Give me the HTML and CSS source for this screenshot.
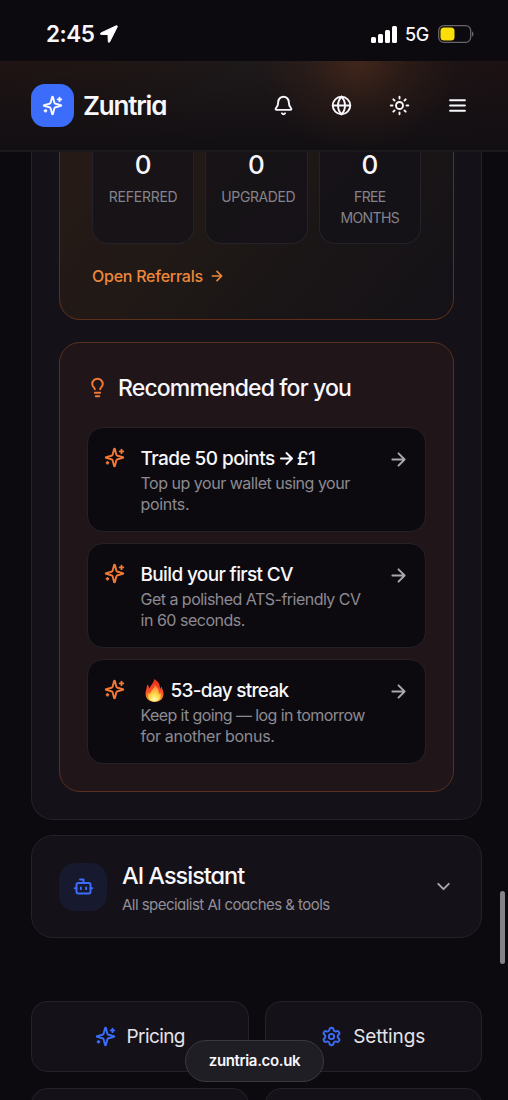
FILE: index.html
```html
<!DOCTYPE html>
<html lang="en">
<head>
<meta charset="utf-8">
<title>Zuntria</title>
<link rel="stylesheet" href="styles.css">
</head>
<body>
<svg class="defs" aria-hidden="true">
  <symbol id="sparkles" viewBox="0 0 24 24"><path d="M9.937 15.5A2 2 0 0 0 8.5 14.063l-6.135-1.582a.5.5 0 0 1 0-.962L8.5 9.936A2 2 0 0 0 9.937 8.5l1.582-6.135a.5.5 0 0 1 .963 0L14.063 8.5A2 2 0 0 0 15.5 9.937l6.135 1.581a.5.5 0 0 1 0 .964L15.5 14.063a2 2 0 0 0-1.437 1.437l-1.582 6.135a.5.5 0 0 1-.963 0z"/><path d="M20 3v4M22 5h-4M4 17v2M5 18H3"/></symbol>
  <symbol id="arrow" viewBox="0 0 24 24"><path d="M5 12h14M12 5l7 7-7 7"/></symbol>
</svg>
<div class="screen">
  <div class="status">
    <span class="time">2:45</span>
    <svg class="location" viewBox="0 0 18 18"><path d="M16.200.8.9 8c-.9.4-.6 1.400.2 1.400l6.900.1.3 7c0 1 1 1.200 1.400.3L17.200 1.900c.4-.9-.2-1.500-1-1.100z"/></svg>
    <svg class="signal" viewBox="0 0 27 17"><rect x="0" y="11" width="5" height="6" rx="1.500"/><rect x="7" y="8" width="5" height="9" rx="1.500"/><rect x="14" y="4" width="5" height="13" rx="1.500"/><rect x="21" y="0" width="5" height="17" rx="1.500"/></svg>
    <span class="network">5G</span>
    <svg class="battery" viewBox="0 0 36 18"><rect x=".7" y=".7" width="32" height="16.600" rx="5" fill="none" stroke="#66656a" stroke-width="1.300"/><rect x="2.500" y="2.500" width="14" height="13" rx="3.500" fill="#fbdf09"/><path d="M34 6.500c2 .6 2 4.400 0 5z" fill="#66656a"/></svg>
  </div>
  <header class="header">
    <div class="logo"><svg class="icon"><use href="#sparkles"/></svg></div>
    <span class="brand">Zuntria</span>
    <nav class="nav">
      <svg class="icon" viewBox="0 0 24 24"><path d="M10.268 21a2 2 0 0 0 3.464 0M3.262 15.326A1 1 0 0 0 4 17h16a1 1 0 0 0 .74-1.673C19.410 13.956 18 12.499 18 8A6 6 0 0 0 6 8c0 4.499-1.411 5.956-2.738 7.326"/></svg>
      <svg class="icon" viewBox="0 0 24 24"><circle cx="12" cy="12" r="10"/><path d="M12 2a14.500 14.500 0 0 0 0 20 14.500 14.500 0 0 0 0-20M2 12h20"/></svg>
      <svg class="icon" viewBox="0 0 24 24"><circle cx="12" cy="12" r="4"/><path d="M12 2v2M12 20v2M4.930 4.930l1.410 1.410M17.660 17.660l1.410 1.410M2 12h2M20 12h2M6.340 17.660l-1.410 1.410M19.070 4.930l-1.410 1.410"/></svg>
      <svg class="icon" viewBox="0 0 24 24"><path d="M3.500 6h17M3.500 12h17M3.500 18h17"/></svg>
    </nav>
  </header>
  <main class="content">
    <section class="panel">
      <div class="referrals">
        <div class="stats">
          <div class="stat"><b>0</b><span class="l-ref">REFERRED</span></div>
          <div class="stat"><b>0</b><span class="l-upg">UPGRADED</span></div>
          <div class="stat"><b>0</b><span class="l-free">FREE MONTHS</span></div>
        </div>
        <a class="open"><span>Open Referrals</span><svg class="icon"><use href="#arrow"/></svg></a>
      </div>
      <div class="recommended">
        <h2 class="rec-title"><svg class="icon" viewBox="0 0 24 24"><path d="M15 14c.2-1 .7-1.700 1.500-2.500 1-.9 1.500-2.200 1.500-3.500A6 6 0 0 0 6 8c0 1 .2 2.200 1.500 3.500.7.7 1.300 1.500 1.500 2.500M9 18h6M10 22h4"/></svg><span>Recommended for you</span></h2>
        <div class="item">
          <svg class="icon spark"><use href="#sparkles"/></svg>
          <div class="copy"><h3><span class="t-trade">Trade 50 points</span><svg class="icon inline-arrow"><use href="#arrow"/></svg><span>£1</span></h3><p><span class="p1">Top up your wallet using your</span><br><span class="p2">points.</span></p></div>
          <svg class="icon go"><use href="#arrow"/></svg>
        </div>
        <div class="item">
          <svg class="icon spark"><use href="#sparkles"/></svg>
          <div class="copy"><h3><span class="t-build">Build your first CV</span></h3><p><span class="p3">Get a polished ATS-friendly CV</span><br><span class="p4">in 60 seconds.</span></p></div>
          <svg class="icon go"><use href="#arrow"/></svg>
        </div>
        <div class="item">
          <svg class="icon spark"><use href="#sparkles"/></svg>
          <div class="copy"><h3><svg class="flame" viewBox="0 0 20 24" role="img" aria-label="fire"><defs><linearGradient id="fg" x1="0" y1="0" x2="0" y2="1"><stop offset="0" stop-color="#e8301c"/><stop offset=".55" stop-color="#f9502a"/><stop offset="1" stop-color="#fca62e"/></linearGradient><radialGradient id="fi" cx=".5" cy=".9" r=".8"><stop offset="0" stop-color="#fffbc0"/><stop offset=".45" stop-color="#ffdc48"/><stop offset="1" stop-color="#fc8a3c"/></radialGradient></defs><path fill="url(#fg)" d="M9.500 0c.3 3.500-3.800 6-4.500 10C4.300 8.500 3.200 7.500 3.400 5.500 1.300 7.300 2 9.500 1.200 11.500-.5 16.500 1 23.500 9.500 24c8 .2 11-6 9.700-11-.4-1.700-1.500-3-1.300-5-1.400.5-1.800 1.700-2 3C15.800 6 14.500 2.500 9.500 0z"/><path fill="url(#fi)" d="M10 6.500c.5 3.500-4.500 5.500-4.500 9.500-.8-.5-1.200-1.500-1.200-2.500C1.500 18.500 4 23.400 9.700 23.500c6 0 8.300-5 6.300-9.500-.3 1-.8 1.500-1.500 1.800C15 12 13.500 8.500 10 6.500z"/></svg><span class="t-streak">53-day streak</span></h3><p><span class="p5">Keep it going — log in tomorrow</span><br><span class="p6">for another bonus.</span></p></div>
          <svg class="icon go"><use href="#arrow"/></svg>
        </div>
      </div>
    </section>
    <section class="assistant">
      <div class="bot"><svg class="icon" viewBox="0 0 24 24"><path d="M12 8V4H8"/><rect width="16" height="12" x="4" y="8" rx="2"/><path d="M2 14h2M20 14h2M15 13v2M9 13v2"/></svg></div>
      <div class="assistant-copy"><h2>AI Assistant</h2><p>All specialist AI coaches &amp; tools</p></div>
      <svg class="icon chevron" viewBox="0 0 24 24"><path d="m6 9 6 6 6-6"/></svg>
    </section>
    <div class="links">
      <a class="link"><svg class="icon"><use href="#sparkles"/></svg><span class="k1">Pricing</span></a>
      <a class="link"><svg class="icon" viewBox="0 0 24 24"><path d="M9.671 4.136a2.340 2.340 0 0 1 4.659 0 2.340 2.340 0 0 0 3.319 1.915 2.340 2.340 0 0 1 2.330 4.033 2.340 2.340 0 0 0 0 3.831 2.340 2.340 0 0 1-2.330 4.033 2.340 2.340 0 0 0-3.319 1.915 2.340 2.340 0 0 1-4.659 0 2.340 2.340 0 0 0-3.320-1.915 2.340 2.340 0 0 1-2.330-4.033 2.340 2.340 0 0 0 0-3.831A2.340 2.340 0 0 1 6.350 6.051a2.340 2.340 0 0 0 3.319-1.915"/><circle cx="12" cy="12" r="3"/></svg><span class="k2">Settings</span></a>
      <a class="link"></a>
      <a class="link"></a>
    </div>
  </main>
  <div class="scrollbar"></div>
  <div class="url">zuntria.co.uk</div>
</div>
</body>
</html>
```
FILE: styles.css
```css
* { box-sizing: border-box; }
body { margin: 0; background: #0c0a0f; }
h2, h3, p { margin: 0; font-weight: 500; }
span { white-space: nowrap; }
.defs { position: absolute; width: 0; height: 0; }
.screen { position: relative; width: 508px; height: 1100px; overflow: hidden; display: flex; flex-direction: column; background: #0c0a0f; color: #f8f7fb; font-family: Inter, "Liberation Sans", sans-serif; }
.icon { display: block; flex: none; width: 21px; height: 21px; fill: none; stroke: currentColor; stroke-width: 2.200; stroke-linecap: round; stroke-linejoin: round; }

.status { flex: none; height: 61px; display: flex; align-items: center; padding: 7px 34px 0 46px; }
.time { width: 49px; margin-top: -2px; font-size: 22.500px; font-weight: 600; letter-spacing: -.5px; }
.location { width: 18px; height: 18px; margin-left: 5px; fill: #fff; stroke: #fff; stroke-width: 1; stroke-linejoin: round; }
.signal { width: 27px; height: 17px; margin-left: auto; fill: #fff; }
.network { width: 25px; margin: 0 8px 0 7px; font-size: 18px; font-weight: 500; letter-spacing: -.4px; }
.battery { width: 36px; height: 18px; }

.header { flex: none; height: 91px; display: flex; align-items: center; padding: 0 40px 1px 31px; border-bottom: 2px solid #1c191e; background: radial-gradient(ellipse 100px 90px at 358px 0, rgba(100, 54, 30, .5), rgba(90, 48, 28, .2) 50%, transparent), linear-gradient(180deg, rgba(18, 15, 19, 0), #120f13 96%), linear-gradient(90deg, #1f1413 0, #1f1614 20%, #1e191a 50%, #1e1515 80%, #1c1113 100%); }
.logo { display: grid; place-items: center; width: 43px; height: 43px; border-radius: 14px; background: #3c6dfa; }
.brand { margin-left: 9px; font-size: 26px; font-weight: 600; letter-spacing: -1.200px; font-feature-settings: "cv11"; }
.nav { display: flex; gap: 37px; margin-left: auto; }

.content { flex: none; padding: 0 26px 0 31px; }
.panel { padding: 0 27px 27px; border: 1px solid #242229; border-top: 0; border-radius: 0 0 22px 22px; background: #141218; }
.referrals { height: 168px; padding: 0 32px; border: 1px solid #602f1a; border-top: 0; border-radius: 0 0 21px 21px; background: linear-gradient(130deg, #261a16 0, #201916 35%, #1a1516 65%, #141218 100%); }
.stats { display: grid; grid-template-columns: repeat(3, minmax(0, 1fr)); gap: 11px; height: 92px; }
.stat { padding: 0 15px; border: 1px solid #242229; border-top: 0; border-radius: 0 0 16px 16px; background: rgba(20, 18, 24, .75); text-align: center; }
.stat b { display: block; height: 34px; line-height: 26px; font-size: 26px; font-weight: 450; font-feature-settings: "cv11"; }
.stat span { display: block; font-size: 14px; line-height: 21px; color: #85838b; white-space: normal; letter-spacing: -.25px; }
.stat .l-upg { letter-spacing: -.4px; }
.stat .l-free { letter-spacing: -.6px; }
.open { display: flex; align-items: center; gap: 6px; margin-top: 21px; height: 22px; color: #ed883b; font-size: 16px; font-weight: 500; letter-spacing: -.25px; }
.open .icon { width: 16px; height: 16px; stroke-width: 2.500; }

.recommended { margin-top: 22px; height: 450px; padding: 27px; border: 1px solid #59301f; border-radius: 21px; background: #201519; }
.rec-title { display: flex; align-items: center; height: 35px; margin-bottom: 22px; font-size: 23px; font-weight: 450; letter-spacing: -.85px; font-feature-settings: "cv11"; }
.rec-title .icon { margin-right: 10px; color: #f17935; }
.item { display: flex; height: 105px; margin-bottom: 11px; padding: 18px 16px 0; border: 1px solid #242126; border-radius: 16px; background: #0c0a0f; }
.spark { margin-top: 1px; color: #f17935; }
.copy { flex: 1; margin-left: 15.500px; }
.copy h3 { display: flex; align-items: center; height: 24px; font-size: 19px; font-weight: 500; letter-spacing: -.55px; }
.copy .t-build { letter-spacing: -.65px; }
.copy .t-streak { letter-spacing: -.7px; }
.inline-arrow { width: 19px; height: 19px; margin: 1px 1px 0 2px; stroke-width: 2.500; }
.copy p { margin-top: 3px; font-size: 16px; line-height: 21px; font-weight: 400; color: #8c8a92; letter-spacing: -.48px; }
.copy .p2, .copy .p6 { letter-spacing: -.3px; }
.copy .p5 { letter-spacing: -.59px; }
.copy .p3 { letter-spacing: -.52px; }
.go { margin-top: 3px; color: #aaa7b0; }
.flame { width: 19px; height: 23px; margin: 0 7px 0 4px; }

.assistant { display: flex; align-items: center; height: 103px; margin-top: 15px; padding: 0 27px; border: 1px solid #242229; border-radius: 22px; background: #141218; }
.bot { display: grid; place-items: center; width: 48px; height: 48px; border-radius: 16px; background: #171a2e; color: #3c6dfa; }
.assistant-copy { margin-left: 15px; padding-top: 5px; font-feature-settings: "cv11"; }
.assistant h2 { height: 31px; font-size: 23.500px; line-height: 31px; letter-spacing: -1px; white-space: nowrap; }
.assistant p { font-size: 15px; line-height: 27px; font-weight: 400; letter-spacing: -.53px; color: #918e97; white-space: nowrap; }
.chevron { margin-left: auto; color: #aaa7b0; }

.links { display: grid; grid-template-columns: 1fr 1fr; gap: 16px; margin-top: 63px; }
.link { display: flex; align-items: center; justify-content: center; gap: 11px; height: 71px; border: 1px solid #242229; border-radius: 16px; background: #141218; font-size: 19px; color: #e5e3e9; }
.k1 { letter-spacing: -.6px; }
.k2 { letter-spacing: -.1px; }
.link .icon { color: #3c6dfa; }

.scrollbar { position: absolute; left: 500px; top: 891px; width: 5px; height: 73px; border-radius: 3px; background: #858388; }
.url { position: absolute; left: 185px; top: 1040px; width: 139px; height: 42px; border: 1px solid #3a3840; border-radius: 21px; background: #201e25; font-size: 15px; line-height: 40px; font-weight: 600; letter-spacing: -.35px; text-align: center; white-space: nowrap; }
```
